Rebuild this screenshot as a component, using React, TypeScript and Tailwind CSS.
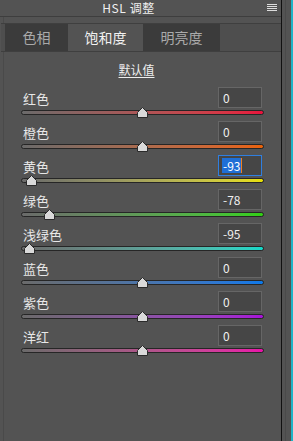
const FONT = { fontFamily: '"Noto Sans CJK SC", "Liberation Sans", sans-serif' };

type Row = {
  label: string;
  value: number;
  track: string;
  focused?: boolean;
};

const ROWS: Row[] = [
  { label: "红色", value: 0, track: "from-[#6a6a6a] to-[#e8103c]" },
  { label: "橙色", value: 0, track: "from-[#6a6a6a] to-[#ea6206]" },
  { label: "黄色", value: -93, track: "from-[#6a6a6a] to-[#e8e000]", focused: true },
  { label: "绿色", value: -78, track: "from-[#6a6a6a] to-[#30d010]" },
  { label: "浅绿色", value: -95, track: "from-[#6a6a6a] to-[#10d8c8]" },
  { label: "蓝色", value: 0, track: "from-[#6a6a6a] to-[#0a78e8]" },
  { label: "紫色", value: 0, track: "from-[#6a6a6a] to-[#a810d8]" },
  { label: "洋红", value: 0, track: "from-[#6a6a6a] to-[#e810a8]" },
];

function Thumb({ value }: { value: number }) {
  // track spans 243px, centre sits at 121px
  const left = 121 + (value / 100) * 119 - 5;
  return (
    <svg
      className="absolute top-[-3px]"
      style={{ left }}
      width="11"
      height="11"
      viewBox="0 0 11 11"
    >
      <path d="M5.5 0.5 L10.5 5.5 V10.5 H0.5 V5.5 Z" fill="#d9d9d9" stroke="#2a2a2a" strokeWidth="1" />
    </svg>
  );
}

function SliderRow({ row }: { row: Row }) {
  return (
    <div className="flex flex-col h-[34px]">
      <div className="flex items-center justify-between h-[21px] pl-[22px] pr-[19px]">
        <span className="text-[13px] text-[#e8e8e8] leading-none pt-[1px]">{row.label}</span>
        {row.focused ? (
          <div className="w-[44px] h-[21px] border border-[#2f7fe0] bg-[#464646] flex items-center pl-[3px]">
            <span className="bg-[#1f6fd6] text-white text-[12px] leading-[15px] px-[1px]">
              {row.value}
            </span>
            <span className="w-[1px] h-[15px] bg-[#f08020]" />
          </div>
        ) : (
          <div className="w-[44px] h-[21px] border border-[#666666] bg-[#464646] flex items-center pl-[4px] text-[12px] text-[#f0f0f0]">
            {row.value}
          </div>
        )}
      </div>
      <div className="relative ml-[20px] mr-[17px] mt-[2px] h-[5px]">
        <div
          className={`h-[5px] rounded-full border border-[#262626] bg-linear-to-r ${row.track}`}
        />
        <Thumb value={row.value} />
      </div>
    </div>
  );
}

export default function App() {
  return (
    <div className="w-[293px] h-[441px] bg-[#535353] flex overflow-hidden" style={FONT}>
      <main className="w-[281px] h-full flex flex-col">
        <header className="relative h-[17px] border-b border-[#3e3e3e] flex items-center justify-center pr-[24px]">
          <span className="text-[12px] text-[#f0f0f0] leading-none tracking-wider">HSL 调整</span>
          <div className="absolute right-[4px] top-[4px] flex flex-col gap-[1px] w-[10px]">
            <span className="h-[1px] bg-[#dddddd]" />
            <span className="h-[1px] bg-[#dddddd]" />
            <span className="h-[1px] bg-[#dddddd]" />
            <span className="h-[1px] bg-[#dddddd]" />
          </div>
        </header>
        <div className="flex-1 flex flex-col border-l border-[#4a4a4a] ml-[3px]">
          <div className="h-[6px]" />
          <nav className="flex h-[29px] border-y border-[#3f3f3f] text-[14px] -ml-[3px] pl-[4px] bg-[#4e4e4e]">
            <div className="w-[63px] bg-[#3b3b3b] flex items-center justify-center text-[#aaaaaa]">色相</div>
            <div className="w-[75px] bg-[#535353] flex items-center justify-center text-[#f2f2f2]">饱和度</div>
            <div className="w-[77px] bg-[#3b3b3b] flex items-center justify-center text-[#aaaaaa]">明亮度</div>
          </nav>
          <div className="h-[35px] flex items-center justify-center pr-[12px] pt-[1px]">
            <span className="text-[12px] text-[#eeeeee] underline underline-offset-2">默认值</span>
          </div>
          <div className="-ml-[3px] flex flex-col">
            {ROWS.map((row) => (
              <SliderRow key={row.label} row={row} />
            ))}
          </div>
        </div>
      </main>
      <div className="w-[1px] h-full bg-[#111111]" />
      <div className="w-[4px] h-full border-r border-[#4a4a4a]" />
      <div className="w-[5px] h-full" />
      <div className="w-[2px] h-full bg-[#1fb3c6]" />
    </div>
  );
}
